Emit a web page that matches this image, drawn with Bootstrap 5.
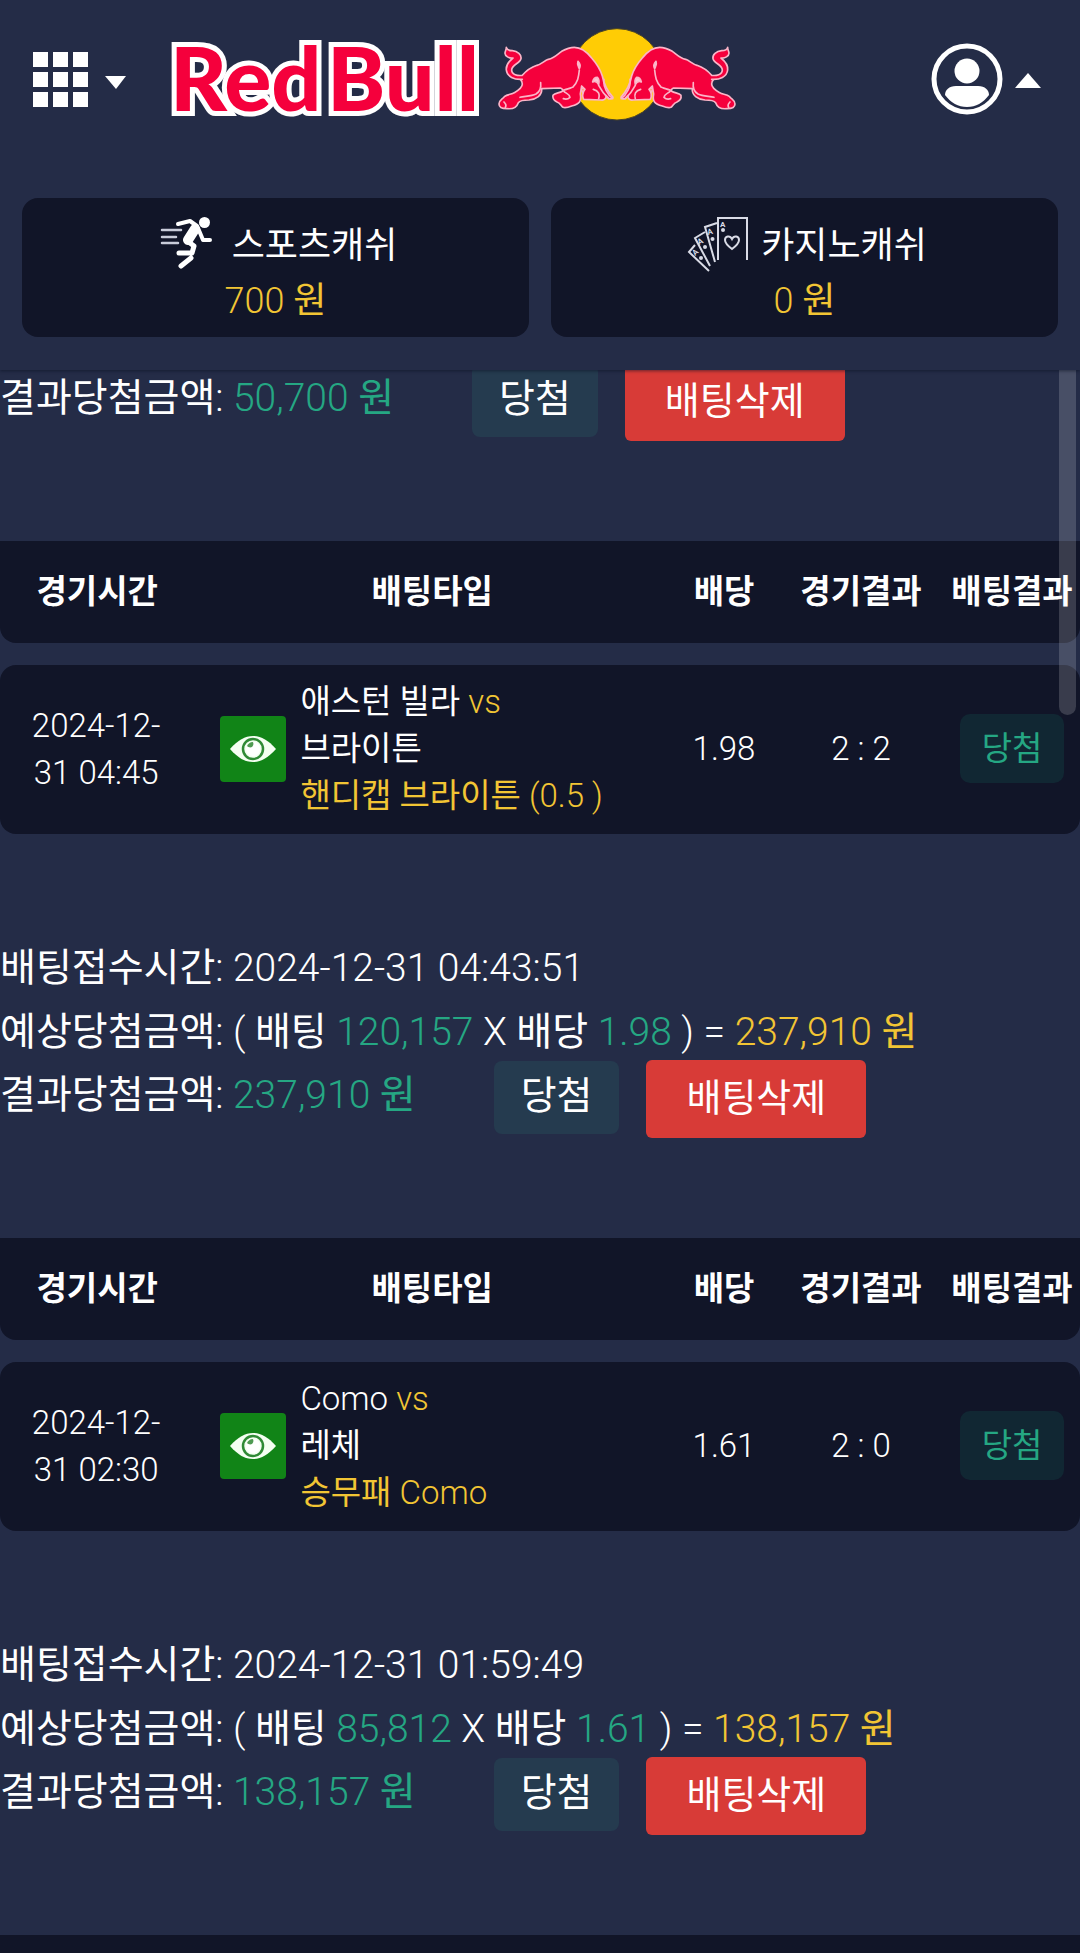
<!DOCTYPE html>
<html lang="ko">
<head>
<meta charset="utf-8">
<meta name="viewport" content="width=device-width, initial-scale=1">
<title>배팅내역</title>
<link href="https://cdn.jsdelivr.net/npm/bootstrap@5.3.0/dist/css/bootstrap.min.css" rel="stylesheet">
<style>
:root{--page:#242c47;--panel:#111528;--gold:#f2c534;--mint:#25a783;--danger:#d83b37}
body{background:var(--page);color:#fff;font-family:"Roboto Light",Roboto,"Noto Sans CJK KR",sans-serif;font-weight:400}
.top-bar{background:var(--page);box-shadow:0 1px 3px rgba(10,14,32,.55);z-index:3}
.brand-row{height:198px;padding:20px 39px 0 33px}
.icon-btn{background:none;border:0;padding:0;color:#fff;line-height:0}
.wallets{padding:0 22px 33px;gap:22px}
.wallet{background:var(--panel);border-radius:16px;padding:18px 0 7px;font-size:36px}
.wallet-name{height:56px;gap:13px;line-height:60px}
.wallet-sum{line-height:58px}
.gold{color:var(--gold)}
.mint{color:var(--mint)}
.history{margin-top:-7px}
.scroll-thumb{right:4px;top:0;width:17px;height:345px;background:rgba(255,255,255,.17);border-radius:0 0 9px 9px;z-index:2}
.bet-table{border-collapse:separate;border-spacing:0;table-layout:fixed;font-size:33px;line-height:47px}
.bet-table th{background:var(--panel);height:102px;padding:0 0 2px;font-weight:700;text-align:center;white-space:nowrap}
.bet-table th:first-child{border-bottom-left-radius:16px}
.bet-table th:last-child{border-bottom-right-radius:16px}
.bet-table .spacer td{height:22px;padding:0}
.bet-table .bet td{background:var(--panel);padding:13px 0 15px;vertical-align:middle;text-align:center}
.bet-table .bet td:first-child{border-radius:16px 0 0 16px;padding:13px 25px 15px 23px}
.bet-table .bet td:last-child{border-radius:0 16px 16px 0}
.c-time{width:18%}.c-odds{width:108px}.c-score{width:166px}.c-result{width:136px}
.pick{gap:14px;padding-left:26px}
.eye-btn{background:#118417;border-radius:4px;width:66px;height:66px}
.row-tag{background:#112733;color:var(--mint);border-radius:10px;padding:11px 22px}
.receipt{font-size:39px;line-height:64px;padding:102px 0 100px;white-space:nowrap}
.receipt.cut{padding-top:0}
.outcome{line-height:70px}
.receipt:not(.cut) .outcome{margin-top:-4px}
.won-tag{background:#253b4f;border-radius:8px;padding:0 27px 3px;margin:1px 27px 0 78px}
.del-btn{background:var(--danger);border-radius:6px;border:0;color:#fff;padding:3px 40px 5px;line-height:70px;font-size:38px}
.next-head{height:102px;background:var(--panel)}
.logo-word{font-family:Lato,sans-serif;font-weight:900;font-size:88px}
.pip{font-family:Roboto,sans-serif;font-weight:700;font-size:8px}
</style>
<script src="https://cdn.jsdelivr.net/npm/bootstrap@5.3.0/dist/js/bootstrap.bundle.min.js"></script>
</head>
<body>
<svg class="d-none">
  <symbol id="eye" viewBox="0 0 48 28">
    <path d="M1 14C9 5 16 1 24 1s15 4 23 13C39 23 32 27 24 27S9 23 1 14z" fill="#f4fff2"/>
    <circle cx="24" cy="14" r="10" fill="#f4fff2" stroke="#2f8a35" stroke-width="2.500"/>
    <path d="M24 7c4 0 7 3 7 7s-3 7-7 7-7-3-7-7c0-1 0-2 1-3 1 1 4 1 5 0s1-3 1-4z" fill="#fff"/>
    <path d="M18 11c1-2 3-4 6-4 1 2 0 4-1 5-2 1-4 0-5-1z" fill="#4f9a52"/>
  </symbol>
</svg>
<div class="vh-100 d-flex flex-column overflow-hidden">
  <header class="top-bar position-relative flex-shrink-0">
    <div class="brand-row d-flex align-items-start">
      <button class="icon-btn d-flex align-items-center" type="button" aria-label="메뉴">
        <svg width="94" height="118" viewBox="33 20 94 118" fill="#fff">
          <path d="M33 52h15v15H33zM53 52h15v15H53zM73 52h15v15H73zM33 72h15v15H33zM53 72h15v15H53zM73 72h15v15H73zM33 92h15v15H33zM53 92h15v15H53zM73 92h15v15H73z"/>
          <path d="M105 76h21l-10 13z"/>
        </svg>
      </button>
      <a href="#" class="flex-grow-1" aria-label="Red Bull">
        <svg width="620" height="118" viewBox="127 20 620 118">
          <g class="logo-word" fill="#f5003c" stroke="#fff" stroke-width="10" paint-order="stroke">
            <text x="170" y="111">Red</text>
            <text x="327" y="111">Bull</text>
          </g>
          <g transform="translate(480 20) scale(.3333)">
            <circle cx="411" cy="163" r="137" fill="#ffcc05" stroke="#4a4426" stroke-width="3"/>
            <g id="bull" fill="#f5003c" stroke="#fbb5c8" stroke-width="5" stroke-linejoin="round" stroke-linecap="round">
              <path d="M302 204l22 3-12 18z" fill="#ffa25a"/>
              <path d="M127 178c-24 2-46-8-48-28-2-18 10-28 20-36-12 2-24-6-24-14 0-6 4-10 4-18 2 8 8 10 18 10 16 2 28 12 26 24-2 14-28 18-28 34 0 14 18 18 32 16 12-14 26-24 44-30 14-4 22-14 34-18 18-4 26-14 40-24 14-8 26-12 38-12 22 0 38 14 52 32 14 16 26 34 32 54 4 22 12 42 32 64 0 4-6 6-12 4l-10-10c4 8-4 16-14 14l-52-2c-4-8-4-20 4-30l-10-10-4 24c4 22-2 30-26 36-10 4-20 6-26 4-6-4-8-14-18-16-8-4-14-10-12-20 6-8 18-6 28-12 2-4 0-8-6-10l-56 2c2 20-16 32-38 34-14 0-26 0-32 8-4 12-16 20-34 18-12 0-24-4-24-14 0-12 10-14 16-22 10-8 22-6 30-12 14-8 24-18 24-26 0-6-2-10-6-14z"/>
              <path d="M182 188c2 16 0 26-14 34-16 8-36 6-48 10" fill="none"/>
              <path d="M298 150c-2 20-4 36-20 52-12 4-22 8-28 8M250 212c8 10 18 8 20 20-6 6-14 6-20 4M372 178c-4 22 12 48 26 58M356 196c8 16 18 28 30 40M340 208c16 4 20 16 16 28M72 246c4 4 8 10 4 16" fill="none"/>
              <path d="M294 124c6 6 8 14 4 22-4-8-8-12-4-22zM338 186c2-10 8-14 14-14 6 6 6 14 4 22-4-8-10-12-18-8z" fill="#fbc9d6"/>
            </g>
            <use href="#bull" transform="translate(822 0) scale(-1 1)"/>
          </g>
        </svg>
      </a>
      <button class="icon-btn ms-auto" type="button" aria-label="내 정보">
        <svg width="110" height="118" viewBox="931 20 110 118" fill="#fff">
          <circle cx="967" cy="79" r="33" fill="none" stroke="#fff" stroke-width="5"/>
          <circle cx="967" cy="71" r="12.500"/>
          <path d="M956 86h22c7 0 11 4 11 9-6 8-13 12-22 12s-16-4-22-12c0-5 4-9 11-9z"/>
          <path d="M1015 88h26l-13-15z"/>
        </svg>
      </button>
    </div>
    <div class="wallets d-flex text-center">
      <div class="wallet flex-fill w-50">
        <div class="wallet-name d-flex justify-content-center align-items-start">
          <svg width="65" height="56" viewBox="-7 0 65 56" fill="none" stroke="#fff" stroke-linecap="round" stroke-linejoin="round">
            <circle cx="43.500" cy="6.500" r="5.500" fill="#fff" stroke="none"/>
            <path d="M17 8l12-3 7 5" stroke-width="4"/>
            <path d="M34 13l-7 11" stroke-width="10"/>
            <path d="M37 12l5 12h7" stroke-width="4"/>
            <path d="M25 24l8 6-2 7H18M30 42l-10 8" stroke-width="5"/>
            <path d="M1 14h19M1 21h14M1 27h16" stroke-width="2.500" stroke="#c9ccda"/>
          </svg>
          <span>스포츠캐쉬</span>
        </div>
        <div class="wallet-sum gold">700 원</div>
      </div>
      <div class="wallet flex-fill w-50">
        <div class="wallet-name d-flex justify-content-center align-items-start">
          <svg width="66" height="58" viewBox="-5 0 66 58" fill="none" stroke="#d9dbe6" stroke-width="2">
            <path d="M31 44V2h29v42M28 46L18 11l12-4M23 50L8 22l10-6M22 55L2 36l6-7"/>
            <path d="M45 33c-4-3-7-6-7-9 0-4 5-5 7-1 2-4 7-3 7 1 0 3-3 6-7 9z"/>
            <g class="pip" fill="#d9dbe6" stroke="none">
              <text x="33" y="11">A</text>
              <text x="21" y="19" transform="rotate(-14 21 19)">A</text>
              <text x="12" y="29" transform="rotate(-27 12 29)">A</text>
              <text x="8" y="40" transform="rotate(-42 8 40)">A</text>
              <circle cx="36" cy="14" r="2"/><circle cx="25.500" cy="23" r="2"/><circle cx="18" cy="31" r="2"/><circle cx="14" cy="42" r="2"/>
            </g>
          </svg>
          <span>카지노캐쉬</span>
        </div>
        <div class="wallet-sum gold">0 원</div>
      </div>
    </div>
  </header>

  <main class="position-relative flex-fill overflow-hidden">
    <div class="scroll-thumb position-absolute"></div>
    <div class="history">
      <section class="receipt cut">
        <div class="outcome d-flex align-items-start">
          <span>결과당첨금액: <span class="mint">50,700 원</span></span>
          <span class="won-tag">당첨</span>
          <button class="del-btn" type="button">배팅삭제</button>
        </div>
      </section>

      <table class="bet-table w-100">
        <colgroup><col class="c-time"><col><col class="c-odds"><col class="c-score"><col class="c-result"></colgroup>
        <thead><tr><th>경기시간</th><th>배팅타입</th><th>배당</th><th>경기결과</th><th>배팅결과</th></tr></thead>
        <tbody>
          <tr class="spacer"><td colspan="5"></td></tr>
          <tr class="bet">
            <td>2024-12-31 04:45</td>
            <td>
              <div class="pick d-flex align-items-center text-start">
                <button class="icon-btn eye-btn flex-shrink-0" type="button" aria-label="경기 보기"><svg width="48" height="28"><use href="#eye"/></svg></button>
                <div>애스턴 빌라 <span class="gold">vs</span><br>브라이튼<br><span class="gold">핸디캡 브라이튼 (0.5 )</span></div>
              </div>
            </td>
            <td>1.98</td><td>2 : 2</td><td><span class="row-tag d-inline-block align-middle">당첨</span></td>
          </tr>
        </tbody>
      </table>
      <section class="receipt">
        <div>배팅접수시간: 2024-12-31 04:43:51</div>
        <div>예상당첨금액: ( 배팅 <span class="mint">120,157</span> X 배당 <span class="mint">1.98</span> ) = <span class="gold">237,910 원</span></div>
        <div class="outcome d-flex align-items-start">
          <span>결과당첨금액: <span class="mint">237,910 원</span></span>
          <span class="won-tag">당첨</span>
          <button class="del-btn" type="button">배팅삭제</button>
        </div>
      </section>

      <table class="bet-table w-100">
        <colgroup><col class="c-time"><col><col class="c-odds"><col class="c-score"><col class="c-result"></colgroup>
        <thead><tr><th>경기시간</th><th>배팅타입</th><th>배당</th><th>경기결과</th><th>배팅결과</th></tr></thead>
        <tbody>
          <tr class="spacer"><td colspan="5"></td></tr>
          <tr class="bet">
            <td>2024-12-31 02:30</td>
            <td>
              <div class="pick d-flex align-items-center text-start">
                <button class="icon-btn eye-btn flex-shrink-0" type="button" aria-label="경기 보기"><svg width="48" height="28"><use href="#eye"/></svg></button>
                <div>Como <span class="gold">vs</span><br>레체<br><span class="gold">승무패 Como</span></div>
              </div>
            </td>
            <td>1.61</td><td>2 : 0</td><td><span class="row-tag d-inline-block align-middle">당첨</span></td>
          </tr>
        </tbody>
      </table>
      <section class="receipt">
        <div>배팅접수시간: 2024-12-31 01:59:49</div>
        <div>예상당첨금액: ( 배팅 <span class="mint">85,812</span> X 배당 <span class="mint">1.61</span> ) = <span class="gold">138,157 원</span></div>
        <div class="outcome d-flex align-items-start">
          <span>결과당첨금액: <span class="mint">138,157 원</span></span>
          <span class="won-tag">당첨</span>
          <button class="del-btn" type="button">배팅삭제</button>
        </div>
      </section>
      <div class="next-head"></div>
    </div>
  </main>
</div>
</body>
</html>
